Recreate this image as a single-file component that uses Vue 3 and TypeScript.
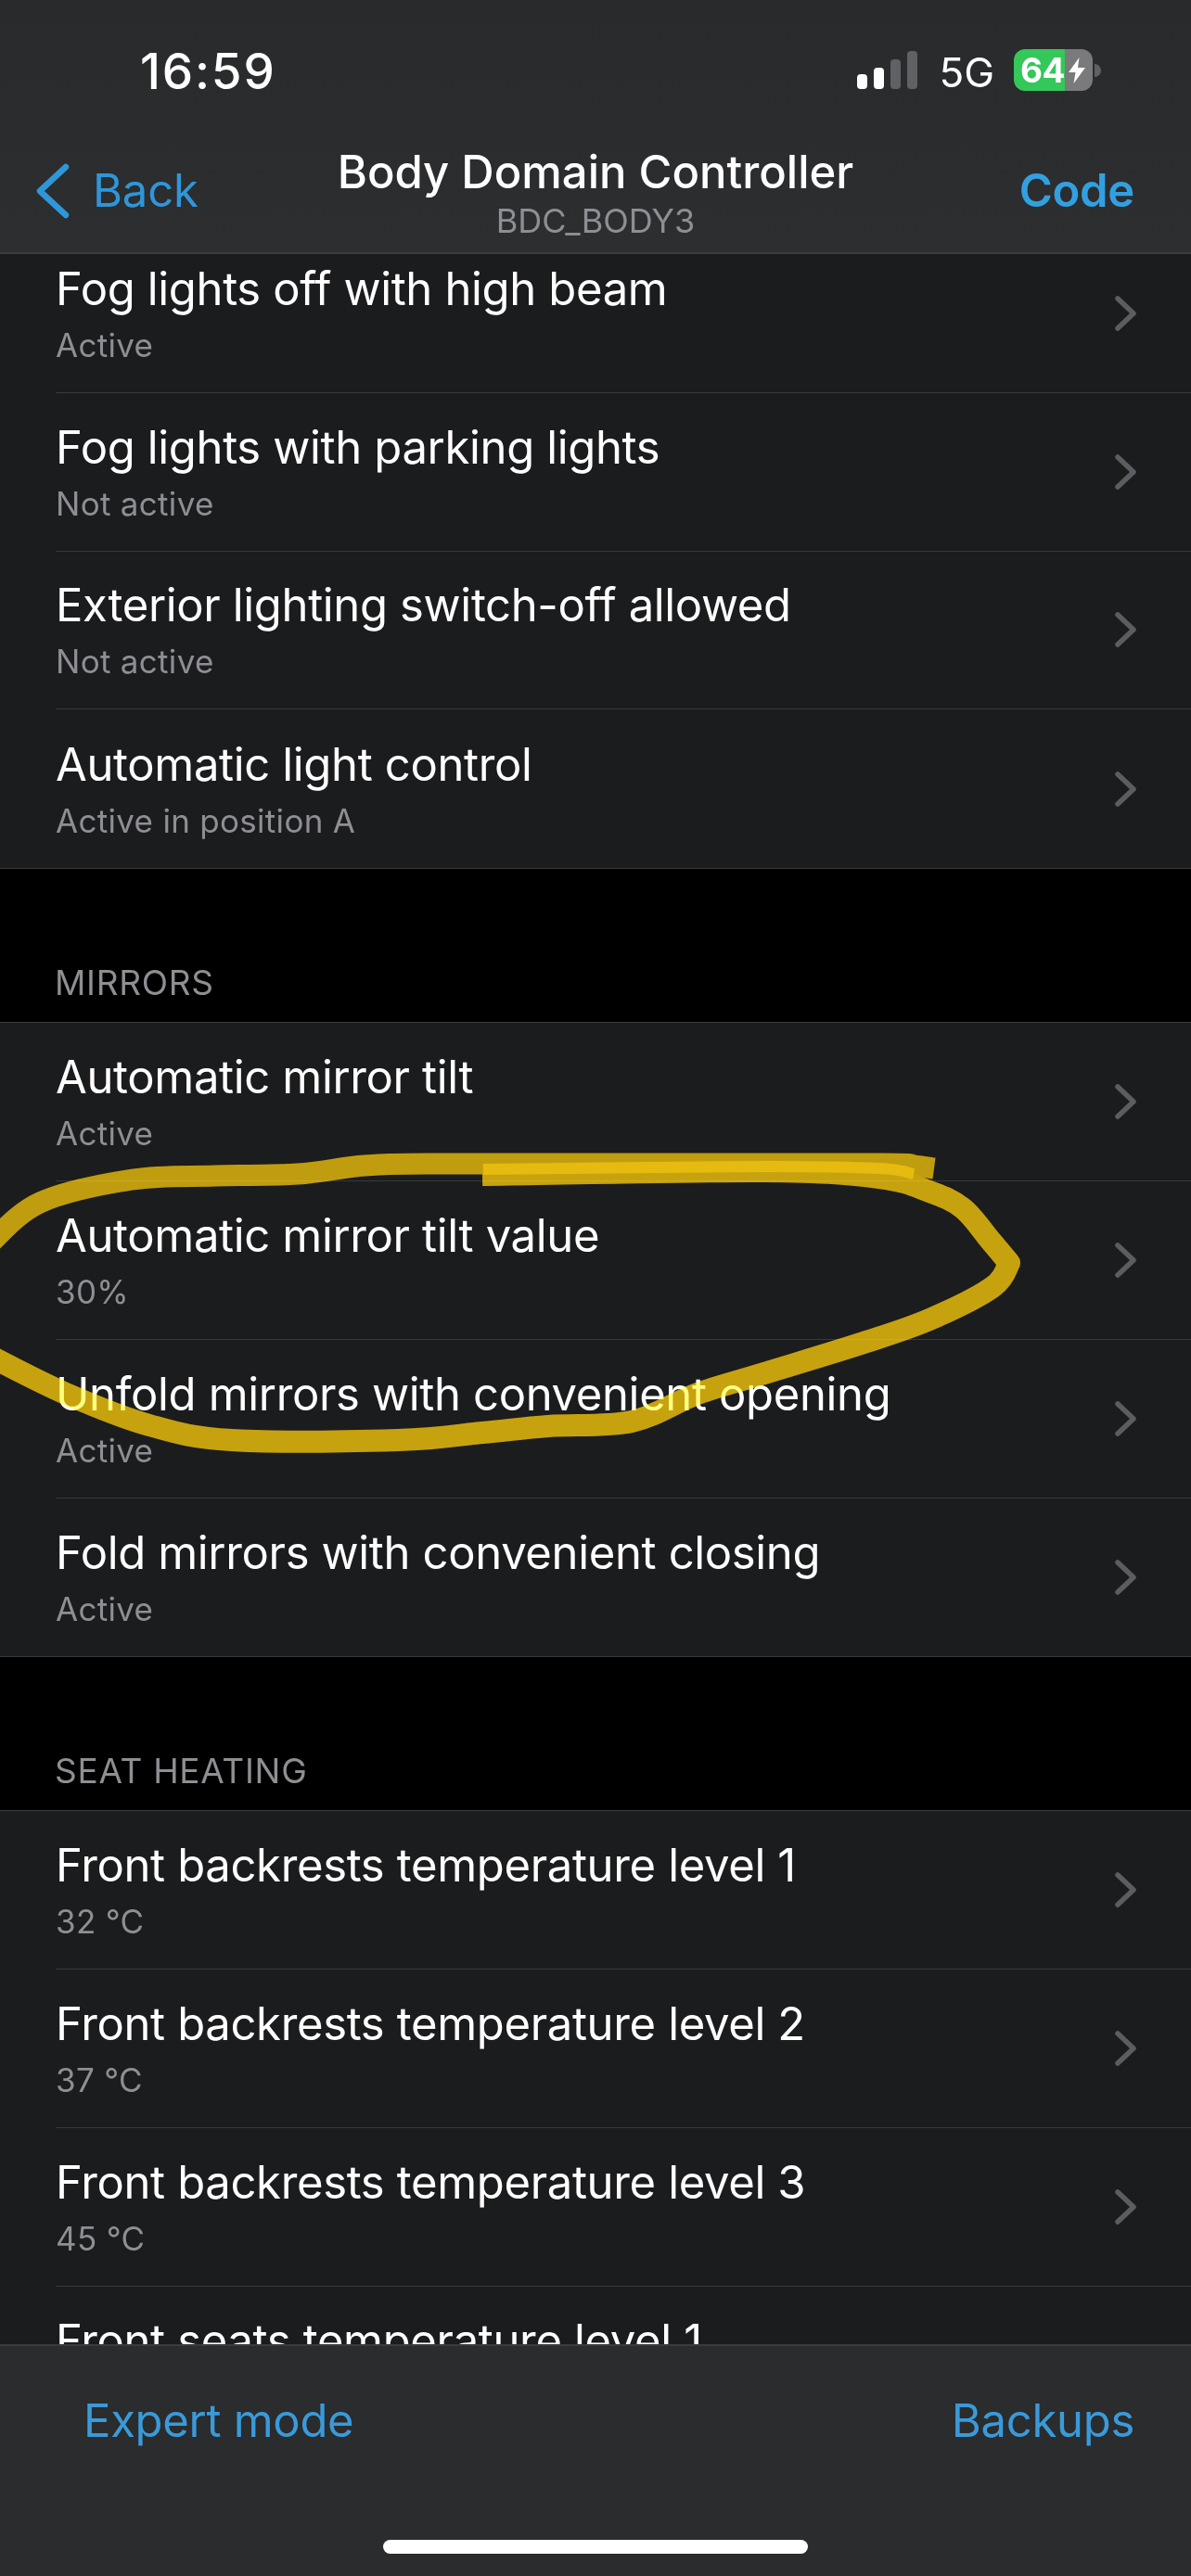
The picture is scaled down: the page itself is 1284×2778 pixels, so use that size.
<script setup lang="ts">
interface Row { title: string; value: string }
interface Section { name?: string; rows: Row[] }
type Pt = [number, number]

const sections: Section[] = [
  { rows: [
    { title: 'Fog lights off with high beam', value: 'Active' },
    { title: 'Fog lights with parking lights', value: 'Not active' },
    { title: 'Exterior lighting switch-off allowed', value: 'Not active' },
    { title: 'Automatic light control', value: 'Active in position A' },
  ] },
  { name: 'MIRRORS', rows: [
    { title: 'Automatic mirror tilt', value: 'Active' },
    { title: 'Automatic mirror tilt value', value: '30%' },
    { title: 'Unfold mirrors with convenient opening', value: 'Active' },
    { title: 'Fold mirrors with convenient closing', value: 'Active' },
  ] },
  { name: 'SEAT HEATING', rows: [
    { title: 'Front backrests temperature level 1', value: '32 °C' },
    { title: 'Front backrests temperature level 2', value: '37 °C' },
    { title: 'Front backrests temperature level 3', value: '45 °C' },
    { title: 'Front seats temperature level 1', value: '32 °C' },
  ] },
]

function smooth(p: Pt[]): string {
  let d = `M${p[0][0]} ${p[0][1]}`
  for (let i = 0; i < p.length - 1; i++) {
    const a = p[Math.max(i - 1, 0)], b = p[i], c = p[i + 1], e = p[Math.min(i + 2, p.length - 1)]
    d += `C${(b[0] + (c[0] - a[0]) / 6).toFixed(1)} ${(b[1] + (c[1] - a[1]) / 6).toFixed(1)} ${(c[0] - (e[0] - b[0]) / 6).toFixed(1)} ${(c[1] - (e[1] - b[1]) / 6).toFixed(1)} ${c[0]} ${c[1]}`
  }
  return d
}

const firstStroke = smooth([
  [-12, 1342], [43, 1297], [143, 1272], [232, 1268], [321, 1266], [393, 1257], [470, 1255],
  [700, 1255], [950, 1255], [985, 1257], [1007, 1260],
])
const secondStroke = smooth([
  [520, 1267], [823, 1263], [948, 1270], [1002, 1285], [1038, 1303], [1068, 1338], [1088, 1362],
]) + smooth([
  [1088, 1362], [1070, 1388], [1002, 1423], [931, 1448], [824, 1481], [752, 1503], [681, 1533], [591, 1538], [520, 1545],
  [429, 1553], [250, 1553], [161, 1537], [71, 1503], [-12, 1462],
]).replace('M', 'L')
const highlight = smooth([[521, 1261], [823, 1258], [948, 1260], [985, 1266]])
</script>

<template>
  <div class="app">
    <header class="top">
      <div class="status">
        <span class="time">16:59</span>
        <div class="status-right">
          <div class="signal">
            <i class="bar on b1"></i><i class="bar on b2"></i><i class="bar b3"></i><i class="bar b4"></i>
          </div>
          <span class="net">5G</span>
          <div class="battery">
            <div class="cell">
              <span class="pct">64</span>
              <svg class="bolt" viewBox="0 0 20 28"><path d="M12.5 0 1 16h7.5L6.5 28 19 11h-8z" fill="#fff"/></svg>
            </div>
            <i class="nub"></i>
          </div>
        </div>
      </div>
      <nav class="nav">
        <div class="back">
          <svg class="back-icon" viewBox="0 0 38 60"><path d="M33 4 5 30l28 26" fill="none" stroke="#2f96d8" stroke-width="6.5" stroke-linecap="round" stroke-linejoin="round"/></svg>
          <span>Back</span>
        </div>
        <div class="heading">
          <div class="title">Body Domain Controller</div>
          <div class="subtitle">BDC_BODY3</div>
        </div>
        <div class="code">Code</div>
      </nav>
    </header>

    <main class="scroll">
      <div class="scroll-inner">
        <section v-for="(s, i) in sections" :key="i">
          <h2 v-if="s.name" class="section-name">{{ s.name }}</h2>
          <div class="group">
            <div v-for="r in s.rows" :key="r.title" class="row">
              <div class="row-text">
                <div class="row-title">{{ r.title }}</div>
                <div class="row-value">{{ r.value }}</div>
              </div>
              <svg class="chev" viewBox="0 0 26 40"><path d="M4 4l17 16L4 36" fill="none" stroke="#5c5d60" stroke-width="5.5" stroke-linecap="round" stroke-linejoin="round"/></svg>
            </div>
          </div>
        </section>
      </div>
    </main>

    <svg class="marker" viewBox="0 0 1284 2778">
      <path :d="firstStroke" fill="none" stroke="#dcc840" stroke-width="23" stroke-linejoin="round"/>
      <path :d="secondStroke" fill="none" stroke="#e0cb40" stroke-width="24" stroke-linejoin="round"/>
      <path :d="highlight" fill="none" stroke="#f1d940" stroke-width="12"/>
    </svg>

    <footer class="bottom">
      <div class="actions">
        <span>Expert mode</span>
        <span>Backups</span>
      </div>
      <div class="home"></div>
    </footer>
  </div>
</template>

<style>
html, body { margin: 0; background: #000; }
</style>

<style scoped>
.app {
  position: relative;
  width: 1284px;
  height: 2778px;
  display: flex;
  flex-direction: column;
  overflow: hidden;
  background: #000;
  color: #fff;
  font-family: Inter, "Liberation Sans", sans-serif;
}
.top {
  flex: none;
  height: 274px;
  box-sizing: border-box;
  background: linear-gradient(#282a2c, #2c2e30);
  border-bottom: 2px solid #3c3d40;
  position: relative;
  z-index: 2;
}
.status {
  height: 130px;
  display: flex;
  justify-content: space-between;
  box-sizing: border-box;
  padding: 0 97px 0 151px;
  position: relative;
}
.time {
  font-size: 53px;
  font-weight: 500;
  line-height: 60px;
  margin-top: 47px;
  letter-spacing: 1.8px;
}
.status-right { display: flex; align-items: flex-start; }
.signal { display: flex; align-items: flex-end; gap: 7px; height: 41px; margin-top: 55px; }
.bar { display: block; width: 11px; border-radius: 4px; background: #5f6164; }
.bar.on { background: #fff; }
.b1 { height: 16px; }
.b2 { height: 23px; }
.b3 { height: 32px; }
.b4 { height: 41px; }
.net { font-size: 44px; line-height: 50px; margin: 53px 0 0 23px; letter-spacing: 0; }
.battery { display: flex; align-items: center; margin: 53px 0 0 21px; }
.cell {
  width: 85px;
  height: 45px;
  border-radius: 12px;
  background: linear-gradient(90deg, #34c759 0 55px, #7a7a7c 55px);
  display: flex;
  align-items: center;
  padding-left: 7px;
  box-sizing: border-box;
}
.pct { font-size: 37px; font-weight: 700; line-height: 45px; letter-spacing: -0.5px; }
.bolt { width: 20px; height: 28px; margin-left: 3px; }
.nub { display: block; width: 7px; height: 14px; margin-left: 2px; border-radius: 0 7px 7px 0; background: #5f6164; }
.nav {
  height: 142px;
  display: grid;
  grid-template-columns: 1fr auto 1fr;
  align-items: start;
}
.back { display: flex; align-items: flex-start; color: #2f96d8; font-size: 49px; line-height: 60px; margin: 46px 0 0 38px; }
.back span { margin-left: 24px; letter-spacing: -0.2px; }
.back-icon { width: 38px; height: 60px; }
.heading { text-align: center; margin-top: 26px; }
.title { font-size: 49px; font-weight: 500; line-height: 60px; letter-spacing: 0; }
.subtitle { font-size: 36px; line-height: 40px; margin-top: 2px; color: #8e8e93; }
.code { justify-self: end; color: #32a0e0; font-size: 49px; font-weight: 600; line-height: 60px; margin: 46px 61px 0 0; letter-spacing: -0.3px; }
.scroll { flex: 1; min-height: 0; overflow: hidden; }
.scroll-inner { margin-top: -22px; }
.section-name {
  margin: 0;
  height: 165px;
  box-sizing: border-box;
  padding: 102px 0 0 59px;
  font-size: 37px;
  font-weight: 400;
  line-height: 42px;
  letter-spacing: 0.7px;
  color: #8e8e93;
  background: #000;
}
.group { background: #1b1c1e; border-top: 1px solid #3a3b3e; border-bottom: 1px solid #3a3b3e; padding-left: 60px; }
.row {
  height: 170.8px;
  box-sizing: border-box;
  display: flex;
  align-items: center;
  justify-content: space-between;
  border-bottom: 1px solid #38393c;
  padding-right: 57px;
}
.row:last-child { border-bottom: 0; }
.row-title { font-size: 49px; line-height: 60px; letter-spacing: -0.35px; }
.row-value { font-size: 35px; line-height: 42px; margin-top: 9px; color: #8e8e93; letter-spacing: 0.3px; }
.row-text { margin-top: -1px; }
.chev { width: 26px; height: 40px; flex: none; }
.marker {
  position: absolute;
  top: 0;
  left: 0;
  width: 1284px;
  height: 2778px;
  pointer-events: none;
  mix-blend-mode: hard-light;
  filter: blur(0.6px);
  z-index: 1;
}
.bottom {
  flex: none;
  height: 250px;
  box-sizing: border-box;
  background: #2a2c2e;
  border-top: 2px solid #3a3b3e;
  position: relative;
  z-index: 2;
  display: flex;
  flex-direction: column;
  align-items: center;
}
.actions {
  width: 100%;
  box-sizing: border-box;
  display: flex;
  justify-content: space-between;
  padding: 51px 61px 0 90px;
  color: #3a9ad9;
  font-size: 49px;
  line-height: 60px;
  letter-spacing: -0.3px;
}
.home { width: 458px; height: 15px; border-radius: 8px; background: #fff; margin-top: 98px; }
</style>
